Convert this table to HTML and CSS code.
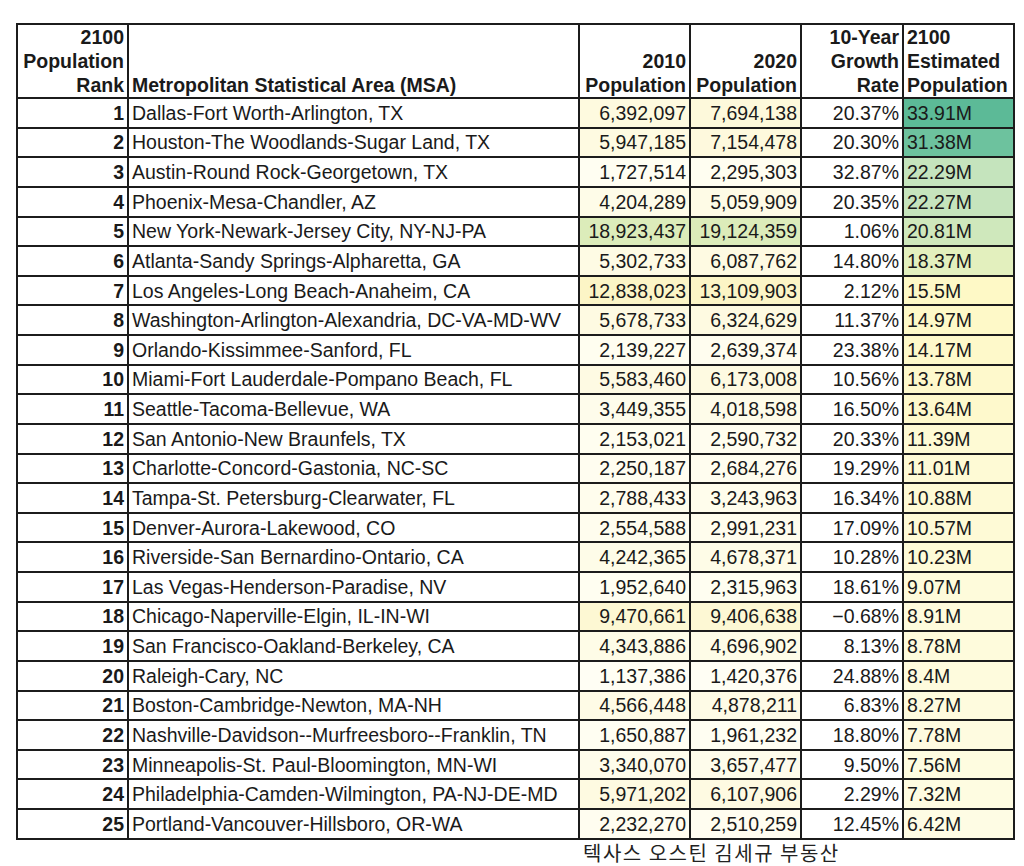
FILE: index.html
```html
<!DOCTYPE html>
<html lang="en">
<head>
<meta charset="utf-8">
<title>2100 Population Rank</title>
<link rel="stylesheet" href="styles.css">
</head>
<body>
<div class="sheet">
<table class="pop">
<colgroup>
<col class="c-rank"><col class="c-msa"><col class="c-p10"><col class="c-p20"><col class="c-gr"><col class="c-est">
</colgroup>
<thead>
<tr>
<th class="r">2100<br>Population<br>Rank</th>
<th class="l">Metropolitan Statistical Area (MSA)</th>
<th class="r">2010<br>Population</th>
<th class="r">2020<br>Population</th>
<th class="r">10-Year<br>Growth<br>Rate</th>
<th class="l">2100<br>Estimated<br>Population</th>
</tr>
</thead>
<tbody>
<tr><td class="rank">1</td><td class="msa">Dallas-Fort Worth-Arlington, TX</td><td class="num" style="background:#FEFADF">6,392,097</td><td class="num" style="background:#FDF9DB">7,694,138</td><td class="num">20.37%</td><td class="est" style="background:#5CBA97">33.91M</td></tr>
<tr><td class="rank">2</td><td class="msa">Houston-The Woodlands-Sugar Land, TX</td><td class="num" style="background:#FEFAE1">5,947,185</td><td class="num" style="background:#FEF9DD">7,154,478</td><td class="num">20.30%</td><td class="est" style="background:#6DC29E">31.38M</td></tr>
<tr><td class="rank">3</td><td class="msa">Austin-Round Rock-Georgetown, TX</td><td class="num" style="background:#FFFEF2">1,727,514</td><td class="num" style="background:#FFFEF1">2,295,303</td><td class="num">32.87%</td><td class="est" style="background:#C5E4BD">22.29M</td></tr>
<tr><td class="rank">4</td><td class="msa">Phoenix-Mesa-Chandler, AZ</td><td class="num" style="background:#FEFCE8">4,204,289</td><td class="num" style="background:#FEFBE6">5,059,909</td><td class="num">20.35%</td><td class="est" style="background:#C6E4BD">22.27M</td></tr>
<tr><td class="rank">5</td><td class="msa">New York-Newark-Jersey City, NY-NJ-PA</td><td class="num" style="background:#DCECBA">18,923,437</td><td class="num" style="background:#DCECBA">19,124,359</td><td class="num">1.06%</td><td class="est" style="background:#CFE8BC">20.81M</td></tr>
<tr><td class="rank">6</td><td class="msa">Atlanta-Sandy Springs-Alpharetta, GA</td><td class="num" style="background:#FEFBE4">5,302,733</td><td class="num" style="background:#FEFAE2">6,087,762</td><td class="num">14.80%</td><td class="est" style="background:#E3F0BE">18.37M</td></tr>
<tr><td class="rank">7</td><td class="msa">Los Angeles-Long Beach-Anaheim, CA</td><td class="num" style="background:#FCF5C6">12,838,023</td><td class="num" style="background:#FCF5C6">13,109,903</td><td class="num">2.12%</td><td class="est" style="background:#FEF9C6">15.5M</td></tr>
<tr><td class="rank">8</td><td class="msa">Washington-Arlington-Alexandria, DC-VA-MD-WV</td><td class="num" style="background:#FEFAE2">5,678,733</td><td class="num" style="background:#FEFAE1">6,324,629</td><td class="num">11.37%</td><td class="est" style="background:#FEF9C8">14.97M</td></tr>
<tr><td class="rank">9</td><td class="msa">Orlando-Kissimmee-Sanford, FL</td><td class="num" style="background:#FFFEF0">2,139,227</td><td class="num" style="background:#FFFDEF">2,639,374</td><td class="num">23.38%</td><td class="est" style="background:#FEF9CA">14.17M</td></tr>
<tr><td class="rank">10</td><td class="msa">Miami-Fort Lauderdale-Pompano Beach, FL</td><td class="num" style="background:#FEFAE3">5,583,460</td><td class="num" style="background:#FEFAE1">6,173,008</td><td class="num">10.56%</td><td class="est" style="background:#FEF9CC">13.78M</td></tr>
<tr><td class="rank">11</td><td class="msa">Seattle-Tacoma-Bellevue, WA</td><td class="num" style="background:#FEFCEB">3,449,355</td><td class="num" style="background:#FEFCE9">4,018,598</td><td class="num">16.50%</td><td class="est" style="background:#FEF9CC">13.64M</td></tr>
<tr><td class="rank">12</td><td class="msa">San Antonio-New Braunfels, TX</td><td class="num" style="background:#FFFEF0">2,153,021</td><td class="num" style="background:#FFFDEF">2,590,732</td><td class="num">20.33%</td><td class="est" style="background:#FEFAD4">11.39M</td></tr>
<tr><td class="rank">13</td><td class="msa">Charlotte-Concord-Gastonia, NC-SC</td><td class="num" style="background:#FFFDF0">2,250,187</td><td class="num" style="background:#FFFDEF">2,684,276</td><td class="num">19.29%</td><td class="est" style="background:#FEFAD5">11.01M</td></tr>
<tr><td class="rank">14</td><td class="msa">Tampa-St. Petersburg-Clearwater, FL</td><td class="num" style="background:#FFFDED">2,788,433</td><td class="num" style="background:#FFFDEC">3,243,963</td><td class="num">16.34%</td><td class="est" style="background:#FEFAD5">10.88M</td></tr>
<tr><td class="rank">15</td><td class="msa">Denver-Aurora-Lakewood, CO</td><td class="num" style="background:#FFFDEE">2,554,588</td><td class="num" style="background:#FFFDED">2,991,231</td><td class="num">17.09%</td><td class="est" style="background:#FEFAD6">10.57M</td></tr>
<tr><td class="rank">16</td><td class="msa">Riverside-San Bernardino-Ontario, CA</td><td class="num" style="background:#FEFCE8">4,242,365</td><td class="num" style="background:#FEFCE7">4,678,371</td><td class="num">10.28%</td><td class="est" style="background:#FEFBD7">10.23M</td></tr>
<tr><td class="rank">17</td><td class="msa">Las Vegas-Henderson-Paradise, NV</td><td class="num" style="background:#FFFEF1">1,952,640</td><td class="num" style="background:#FFFEF1">2,315,963</td><td class="num">18.61%</td><td class="est" style="background:#FEFBDB">9.07M</td></tr>
<tr><td class="rank">18</td><td class="msa">Chicago-Naperville-Elgin, IL-IN-WI</td><td class="num" style="background:#FDF8D3">9,470,661</td><td class="num" style="background:#FDF8D4">9,406,638</td><td class="num">−0.68%</td><td class="est" style="background:#FEFBDC">8.91M</td></tr>
<tr><td class="rank">19</td><td class="msa">San Francisco-Oakland-Berkeley, CA</td><td class="num" style="background:#FEFCE7">4,343,886</td><td class="num" style="background:#FEFCE7">4,696,902</td><td class="num">8.13%</td><td class="est" style="background:#FEFBDC">8.78M</td></tr>
<tr><td class="rank">20</td><td class="msa">Raleigh-Cary, NC</td><td class="num" style="background:#FFFEF4">1,137,386</td><td class="num" style="background:#FFFEF4">1,420,376</td><td class="num">24.88%</td><td class="est" style="background:#FEFBDD">8.4M</td></tr>
<tr><td class="rank">21</td><td class="msa">Boston-Cambridge-Newton, MA-NH</td><td class="num" style="background:#FEFBE6">4,566,448</td><td class="num" style="background:#FEFBE6">4,878,211</td><td class="num">6.83%</td><td class="est" style="background:#FEFBDE">8.27M</td></tr>
<tr><td class="rank">22</td><td class="msa">Nashville-Davidson--Murfreesboro--Franklin, TN</td><td class="num" style="background:#FFFEF2">1,650,887</td><td class="num" style="background:#FFFEF2">1,961,232</td><td class="num">18.80%</td><td class="est" style="background:#FEFBE0">7.78M</td></tr>
<tr><td class="rank">23</td><td class="msa">Minneapolis-St. Paul-Bloomington, MN-WI</td><td class="num" style="background:#FEFCEB">3,340,070</td><td class="num" style="background:#FEFCEB">3,657,477</td><td class="num">9.50%</td><td class="est" style="background:#FEFCE0">7.56M</td></tr>
<tr><td class="rank">24</td><td class="msa">Philadelphia-Camden-Wilmington, PA-NJ-DE-MD</td><td class="num" style="background:#FEFAE1">5,971,202</td><td class="num" style="background:#FEFAE2">6,107,906</td><td class="num">2.29%</td><td class="est" style="background:#FEFCE1">7.32M</td></tr>
<tr><td class="rank">25</td><td class="msa">Portland-Vancouver-Hillsboro, OR-WA</td><td class="num" style="background:#FFFDF0">2,232,270</td><td class="num" style="background:#FFFDF0">2,510,259</td><td class="num">12.45%</td><td class="est" style="background:#FEFCE4">6.42M</td></tr>
</tbody>
</table>
<div class="caption">텍사스 오스틴 김세규 부동산</div>
</div>
</body>
</html>
```

FILE: styles.css
```css
html, body {
  margin: 0;
  padding: 0;
  background: #ffffff;
}

.sheet {
  padding: 23px 0 0 16px;
  font-family: "Liberation Sans", Arial, sans-serif;
  color: #1a1a1a;
}

.pop {
  border-collapse: collapse;
  table-layout: fixed;
  width: 997px;
  font-size: 19.5px;
}

.c-rank { width: 111px; }
.c-msa { width: 451px; }
.c-p10 { width: 111px; }
.c-p20 { width: 111px; }
.c-gr { width: 102px; }
.c-est { width: 111px; }

.pop th,
.pop td {
  border: 2px solid #1c1c1c;
  padding: 0 3px;
  white-space: nowrap;
  overflow: hidden;
}

.pop th {
  font-weight: bold;
  line-height: 24px;
  vertical-align: bottom;
  height: 71px;
}

.pop th.r { text-align: right; }
.pop th.l { text-align: left; }

.pop tbody tr { height: 29.64px; }

.pop td {
  line-height: 22px;
  vertical-align: middle;
}

.pop td.rank {
  font-weight: bold;
  text-align: right;
}

.pop td.msa { text-align: left; }
.pop td.num { text-align: right; }
.pop td.est { text-align: left; }

.caption {
  margin: 2px 0 0 567px;
  font-family: "Noto Sans CJK KR", sans-serif;
  font-size: 20px;
  line-height: 22px;
  letter-spacing: 1.5px;
  word-spacing: 0;
  color: #222222;
}
```
